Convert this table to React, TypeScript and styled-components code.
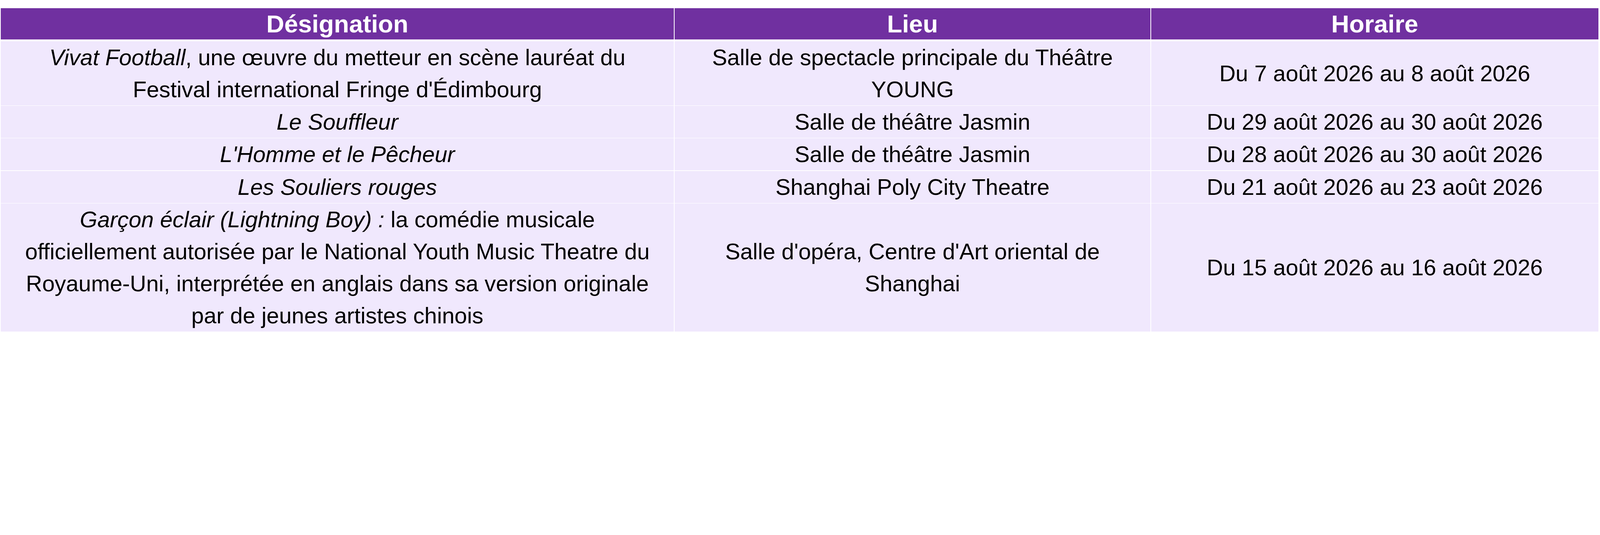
import React from "react";
import styled, { createGlobalStyle } from "styled-components";

/* The reference is measured in picture pixels of a 6315px-wide frame;
   u() turns such a measure into a length relative to the viewport width. */
const u = (n: number) => `calc(${n} * 100vw / 6315)`;

const GlobalStyle = createGlobalStyle`
  html, body {
    margin: 0;
    padding: 0;
    background: #ffffff;
    overflow: hidden;
  }
  body {
    font-family: "Liberation Sans", Arial, sans-serif;
  }
`;

const Page = styled.div`
  padding: ${u(32)} 0 0 ${u(3)};
`;

const Table = styled.div`
  display: flex;
  flex-direction: column;
  gap: ${u(2)};
  width: ${u(6306)};
`;

const HeaderRow = styled.div`
  display: grid;
  grid-template-columns: ${u(2657)} ${u(1879)} ${u(1766)};
  column-gap: ${u(2)};
  margin-bottom: ${u(5)};
`;

const HeaderCell = styled.div`
  background: #7030a0;
  color: #ffffff;
  font-family: "Liberation Sans", Arial, sans-serif;
  font-weight: 700;
  font-size: ${u(98)};
  height: ${u(124)};
  line-height: ${u(124)};
  text-align: center;
`;

const BodyRow = styled.div`
  display: grid;
  grid-template-columns: ${u(2657)} ${u(1879)} ${u(1766)};
  column-gap: ${u(2)};
`;

const Cell = styled.div`
  background: #f0e8fd;
  display: flex;
  align-items: center;
  justify-content: center;
`;

const CellText = styled.div`
  color: #000000;
  font-family: "Liberation Sans", Arial, sans-serif;
  font-size: ${u(89)};
  line-height: ${u(126.5)};
  text-align: center;
  white-space: nowrap;
`;

const Title = styled.em`
  font-style: italic;
`;

type Row = {
  name: React.ReactNode;
  place: React.ReactNode;
  time: string;
};

const rows: Row[] = [
  {
    name: (
      <>
        <Title>Vivat Football</Title>, une œuvre du metteur en scène lauréat du
        <br />
        Festival international Fringe d'Édimbourg
      </>
    ),
    place: (
      <>
        Salle de spectacle principale du Théâtre
        <br />
        YOUNG
      </>
    ),
    time: "Du 7 août 2026 au 8 août 2026",
  },
  {
    name: <Title>Le Souffleur</Title>,
    place: "Salle de théâtre Jasmin",
    time: "Du 29 août 2026 au 30 août 2026",
  },
  {
    name: <Title>L'Homme et le Pêcheur</Title>,
    place: "Salle de théâtre Jasmin",
    time: "Du 28 août 2026 au 30 août 2026",
  },
  {
    name: <Title>Les Souliers rouges</Title>,
    place: "Shanghai Poly City Theatre",
    time: "Du 21 août 2026 au 23 août 2026",
  },
  {
    name: (
      <>
        <Title>Garçon éclair (Lightning Boy) :</Title> la comédie musicale
        <br />
        officiellement autorisée par le National Youth Music Theatre du
        <br />
        Royaume-Uni, interprétée en anglais dans sa version originale
        <br />
        par de jeunes artistes chinois
      </>
    ),
    place: (
      <>
        Salle d'opéra, Centre d'Art oriental de
        <br />
        Shanghai
      </>
    ),
    time: "Du 15 août 2026 au 16 août 2026",
  },
];

export default function App() {
  return (
    <>
      <GlobalStyle />
      <Page>
        <Table>
          <HeaderRow>
            <HeaderCell>Désignation</HeaderCell>
            <HeaderCell>Lieu</HeaderCell>
            <HeaderCell>Horaire</HeaderCell>
          </HeaderRow>
          {rows.map((r, i) => (
            <BodyRow key={i}>
              <Cell>
                <CellText>{r.name}</CellText>
              </Cell>
              <Cell>
                <CellText>{r.place}</CellText>
              </Cell>
              <Cell>
                <CellText>{r.time}</CellText>
              </Cell>
            </BodyRow>
          ))}
        </Table>
      </Page>
    </>
  );
}
